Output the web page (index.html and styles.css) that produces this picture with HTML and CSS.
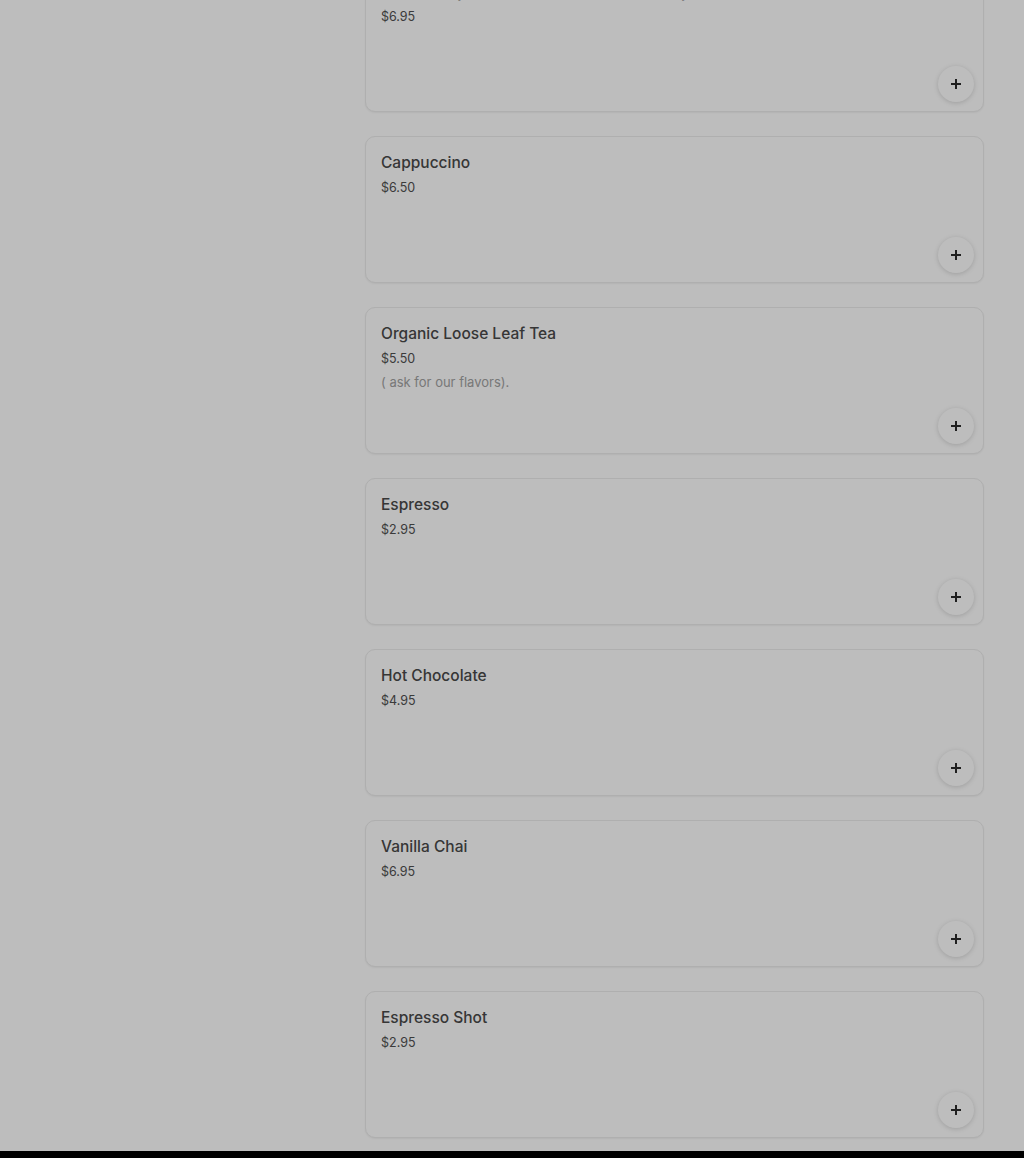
FILE: index.html
```html
<!DOCTYPE html>
<html>
<head>
  <meta charset="UTF-8">
  <meta name="viewport" content="width=device-width, initial-scale=1.0">
  <title>Menu</title>
  <link rel="stylesheet" href="styles.css">
</head>
<body>
  <div class="page">
    <aside class="sidebar"></aside>

    <main class="menu">
      <div class="item">
        <div class="item-name">Latte with your choice of oat, almond, soy or whole milk</div>
        <div class="item-price">$6.95</div>
        <button class="add-button" aria-label="Add">
          <svg width="12" height="12" viewBox="0 0 12 12"><path d="M6 1v10M1 6h10" stroke="currentColor" stroke-width="2"/></svg>
        </button>
      </div>

      <div class="item">
        <div class="item-name">Cappuccino</div>
        <div class="item-price">$6.50</div>
        <button class="add-button" aria-label="Add">
          <svg width="12" height="12" viewBox="0 0 12 12"><path d="M6 1v10M1 6h10" stroke="currentColor" stroke-width="2"/></svg>
        </button>
      </div>

      <div class="item">
        <div class="item-name">Organic Loose Leaf Tea</div>
        <div class="item-price">$5.50</div>
        <div class="item-desc">( ask for our flavors).</div>
        <button class="add-button" aria-label="Add">
          <svg width="12" height="12" viewBox="0 0 12 12"><path d="M6 1v10M1 6h10" stroke="currentColor" stroke-width="2"/></svg>
        </button>
      </div>

      <div class="item">
        <div class="item-name">Espresso</div>
        <div class="item-price">$2.95</div>
        <button class="add-button" aria-label="Add">
          <svg width="12" height="12" viewBox="0 0 12 12"><path d="M6 1v10M1 6h10" stroke="currentColor" stroke-width="2"/></svg>
        </button>
      </div>

      <div class="item">
        <div class="item-name">Hot Chocolate</div>
        <div class="item-price">$4.95</div>
        <button class="add-button" aria-label="Add">
          <svg width="12" height="12" viewBox="0 0 12 12"><path d="M6 1v10M1 6h10" stroke="currentColor" stroke-width="2"/></svg>
        </button>
      </div>

      <div class="item">
        <div class="item-name">Vanilla Chai</div>
        <div class="item-price">$6.95</div>
        <button class="add-button" aria-label="Add">
          <svg width="12" height="12" viewBox="0 0 12 12"><path d="M6 1v10M1 6h10" stroke="currentColor" stroke-width="2"/></svg>
        </button>
      </div>

      <div class="item">
        <div class="item-name">Espresso Shot</div>
        <div class="item-price">$2.95</div>
        <button class="add-button" aria-label="Add">
          <svg width="12" height="12" viewBox="0 0 12 12"><path d="M6 1v10M1 6h10" stroke="currentColor" stroke-width="2"/></svg>
        </button>
      </div>
    </main>
  </div>

  <!-- modal backdrop -->
  <div class="backdrop"></div>
</body>
</html>
```

FILE: styles.css
```css
html {
    background: #000;
}
body {
    margin: 0;
    font-family: 'Inter', 'Roboto', sans-serif;
    background: #fff;
    color: #222;
}
.page {
    display: flex;
    padding-bottom: 13px;
}
.sidebar {
    width: 365px;
    flex-shrink: 0;
}
.menu {
    width: 619px;
    display: flex;
    flex-direction: column;
    gap: 24px;
    margin-top: -35px;
}
.item {
    box-sizing: border-box;
    height: 147px;
    display: flex;
    flex-direction: column;
    padding: 16px 9px 9px 15px;
    border: 1px solid #ececec;
    border-radius: 10px;
    background: #fff;
    box-shadow: 0 1px 2px rgba(0, 0, 0, 0.06);
}
.item-name {
    font-size: 15.5px;
    line-height: 20px;
    font-weight: 500;
    color: #4a4a4a;
}
.item-price {
    margin-top: 6px;
    font-size: 12.5px;
    line-height: 18px;
    color: #505050;
}
.item-desc {
    margin-top: 5px;
    font-size: 13px;
    line-height: 18px;
    color: #a2a2a2;
}
.add-button {
    margin-top: auto;
    align-self: flex-end;
    width: 36px;
    height: 36px;
    border: none;
    border-radius: 50%;
    background: #fff;
    box-shadow: 0 1px 5px rgba(0, 0, 0, 0.16);
    color: #2a2a2a;
    display: flex;
    align-items: center;
    justify-content: center;
    padding: 0;
    cursor: pointer;
}
.backdrop {
    position: fixed;
    inset: 0;
    background: rgba(0, 0, 0, 0.26);
}
```
